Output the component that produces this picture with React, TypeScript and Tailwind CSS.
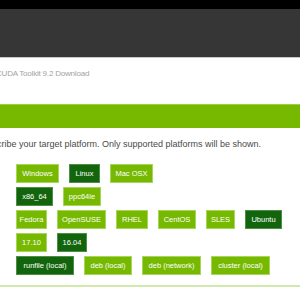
import React from 'react';

type Opcao = { nome: string; w: string; ativo?: boolean };

const linhas: Opcao[][] = [
  [
    { nome: 'Windows', w: 'w-[43px]' },
    { nome: 'Linux', w: 'w-[31px]', ativo: true },
    { nome: 'Mac OSX', w: 'w-[43px]' },
  ],
  [
    { nome: 'x86_64', w: 'w-[37px]', ativo: true },
    { nome: 'ppc64le', w: 'w-[38px]' },
  ],
  [
    { nome: 'Fedora', w: 'w-[31px]' },
    { nome: 'OpenSUSE', w: 'w-[49px]' },
    { nome: 'RHEL', w: 'w-[32px]' },
    { nome: 'CentOS', w: 'w-[38px]' },
    { nome: 'SLES', w: 'w-[29px]' },
    { nome: 'Ubuntu', w: 'w-[37px]', ativo: true },
  ],
  [
    { nome: '17.10', w: 'w-[31px]' },
    { nome: '16.04', w: 'w-[30px]', ativo: true },
  ],
  [
    { nome: 'runfile (local)', w: 'w-[58px]', ativo: true },
    { nome: 'deb (local)', w: 'w-[48px]' },
    { nome: 'deb (network)', w: 'w-[59px]' },
    { nome: 'cluster (local)', w: 'w-[59px]' },
  ],
];

function Botao({ op }: { op: Opcao }) {
  return (
    <div
      className={`${op.w} h-[19px] shrink-0 flex items-center justify-center whitespace-nowrap text-[7.5px] text-white border ${
        op.ativo ? 'bg-[#12650c] border-[#4f8f45]' : 'bg-[#76b900] border-[#a6d75a]'
      }`}
    >
      {op.nome}
    </div>
  );
}

export default function App() {
  return (
    <div className="w-[300px] h-[300px] overflow-hidden bg-white" style={{ fontFamily: '"Liberation Sans", Arial, sans-serif' }}>
      <div className="h-[9px] bg-black" />
      <div className="h-[48px] bg-[#363636]" />
      <div className="h-px bg-[#c9c9c9]" />

      <div className="h-[46px] pt-[11px]">
        <div className="-ml-[4px] text-[8px] leading-[10px] text-[#a3a3a3] whitespace-nowrap tracking-[-0.2px]">
          CUDA Toolkit 9.2 Download
        </div>
      </div>

      <div className="h-[24px] bg-[#76b900] border-t border-[#9bd13f]" />

      <div className="pt-[10px]">
        <div className="-ml-[19px] text-[9px] leading-[12px] text-[#4a4a4a] whitespace-nowrap">
          Describe your target platform. Only supported platforms will be shown.
        </div>
      </div>

      <div className="mt-[14px] pl-[16px] flex flex-col gap-[4px]">
        {linhas.map((linha, i) => (
          <div key={i} className="flex gap-[10px]">
            {linha.map(op => (
              <Botao key={op.nome} op={op} />
            ))}
          </div>
        ))}
      </div>

      <div className="mt-[10px] h-[2px] bg-[#d2e9ae]" />
    </div>
  );
}
